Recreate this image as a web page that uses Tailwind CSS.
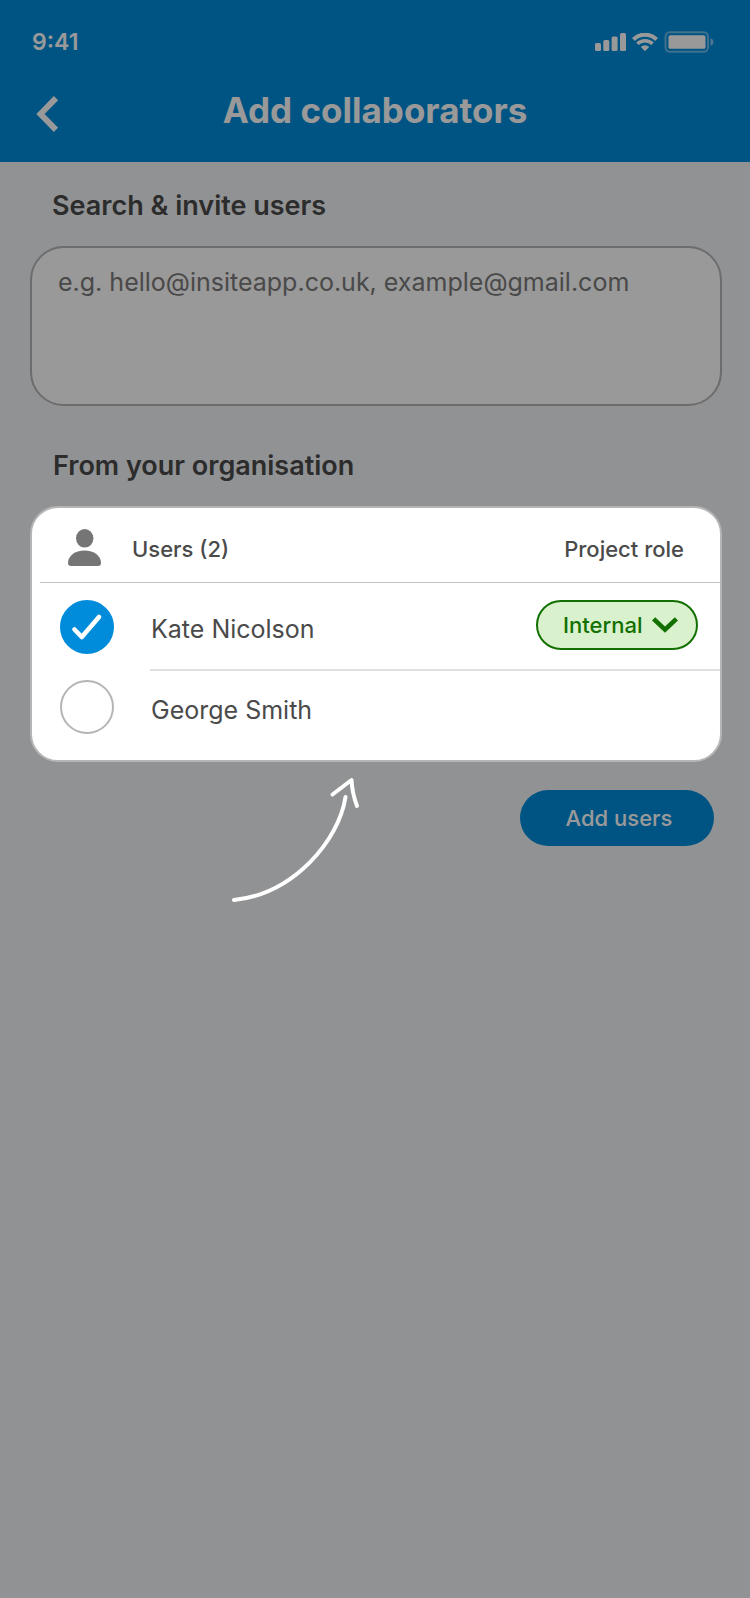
<!DOCTYPE html>
<html lang="en">
<head>
    <meta charset="UTF-8">
    <meta name="viewport" content="width=device-width, initial-scale=1.0">
    <title>Add collaborators</title>
    <script src="https://cdn.jsdelivr.net/npm/@tailwindcss/browser@4"></script>
</head>
<body class="relative min-h-screen bg-[#f2f4f7] font-['Inter','Liberation_Sans',sans-serif] text-[#4a4a4a]">
    <!-- Header -->
    <header class="h-[162px] bg-[#008cda] text-white">
        <!-- Status bar -->
        <div class="flex items-center justify-between pt-[26px] pl-8 pr-9">
            <span class="text-[23px] leading-8 font-semibold">9:41</span>
            <div class="flex items-center gap-1.5">
                <svg class="w-[31px] h-[18px]" viewBox="0 0 31 18" fill="currentColor" aria-hidden="true">
                    <rect x="0" y="10" width="6" height="8" rx="1.5"/>
                    <rect x="8.3" y="7" width="6" height="11" rx="1.5"/>
                    <rect x="16.6" y="3.5" width="6" height="14.5" rx="1.5"/>
                    <rect x="25" y="0" width="6" height="18" rx="1.5"/>
                </svg>
                <svg class="w-[26px] h-[18px]" viewBox="0 0 26 18" fill="none" stroke="currentColor" stroke-width="4" aria-hidden="true">
                    <path d="M1.4 6.5a16.5 16.5 0 0 1 23.2 0" stroke-width="4.2"/>
                    <path d="M5.4 10.8a11 11 0 0 1 15.2 0" stroke-width="3.6"/>
                    <path d="M13 18.2l4.2-4.2a6 6 0 0 0-8.4 0z" fill="currentColor" stroke="none"/>
                </svg>
                <svg class="w-[50px] h-[22px]" viewBox="0 0 50 22" fill="none" aria-hidden="true">
                    <rect x="1.5" y="1.2" width="42.5" height="19.6" rx="4.5" stroke="currentColor" stroke-width="2" opacity=".42"/>
                    <rect x="4.5" y="4.2" width="37" height="13.6" rx="1.6" fill="currentColor"/>
                    <path d="M46.5 7.2c4 1.2 4 6.4 0 7.6z" fill="currentColor" opacity=".5"/>
                </svg>
            </div>
        </div>
        <div class="grid grid-cols-[36px_1fr_36px] items-center pt-[30px] px-[35px]">
            <button type="button" aria-label="Back" class="pt-2">
                <svg class="w-6 h-9" viewBox="0 0 24 36" fill="none" stroke="currentColor" stroke-width="6" aria-hidden="true">
                    <path d="M21 2.2L5.5 18 21 33.8"/>
                </svg>
            </button>
            <h1 class="text-center text-[35px] leading-10 font-bold">Add collaborators</h1>
        </div>
    </header>

    <main class="pt-7 pl-[30px] pr-7">
        <label for="invite" class="block pl-[22px] text-[27px] leading-8 font-semibold">Search &amp; invite users</label>
        <textarea id="invite" placeholder="e.g. hello@insiteapp.co.uk, example@gmail.com" class="block w-full h-40 mt-6 px-[26px] pt-[18px] resize-none rounded-[34px] border-2 border-[#b5b5b5] bg-white text-[25px] leading-8 placeholder:text-[#7a7a7a]"></textarea>

        <h2 id="organisation" class="mt-11 pl-[23px] text-[27px] leading-8 font-semibold">From your organisation</h2>

        <!-- Highlighted users card, sits above the dimmed page -->
        <div class="relative z-20 mt-6 pl-2 pb-[17px] rounded-[28px] border-2 border-[#b5b5b5] bg-white">
            <table aria-labelledby="organisation" class="w-full border-separate border-spacing-0 text-left">
                <thead>
                    <tr class="h-[75px] text-[22px]">
                        <th colspan="2" class="p-0 pl-7 pt-1 border-b border-[#c4c4c4] font-medium">
                            <div class="flex items-center gap-[31px]">
                                <svg class="w-[33px] h-[37px]" viewBox="0 0 33 37" fill="#757575" aria-hidden="true">
                                    <ellipse cx="16.7" cy="9.3" rx="8.7" ry="9.3"/>
                                    <path d="M0 34C0 27 7 21.6 16.5 21.6S33 27 33 34c0 2-1 3-3 3H3c-2 0-3-1-3-3z"/>
                                </svg>
                                <span class="pt-1">Users (2)</span>
                            </div>
                        </th>
                        <th class="p-0 pr-9 pt-2 border-b border-[#c4c4c4] text-right font-medium">Project role</th>
                    </tr>
                </thead>
                <tbody class="text-[25px]">
                    <tr class="h-[88px]">
                        <td class="w-[110px] p-0 pl-5">
                            <div class="relative w-[54px] h-[54px]">
                                <input id="kate" type="checkbox" checked class="peer block size-full appearance-none rounded-full border-2 border-[#b5b5b5] bg-white checked:border-[#008cda] checked:bg-[#008cda]">
                                <svg class="absolute inset-0 hidden pointer-events-none peer-checked:block" viewBox="0 0 54 54" fill="none" stroke="#fff" stroke-width="4.6" stroke-linecap="round" stroke-linejoin="round" aria-hidden="true">
                                    <path d="M14.5 29.5l7.3 7.5L39 17"/>
                                </svg>
                            </div>
                        </td>
                        <td class="p-0 pt-2 pl-px border-b-2 border-[#e0e0e0]"><label for="kate">Kate Nicolson</label></td>
                        <td class="p-0 border-b-2 border-[#e0e0e0]">
                            <div class="relative w-[162px] ml-auto mr-[22px] mb-0.5">
                                <select aria-label="Project role for Kate Nicolson" class="block w-full h-[50px] pl-[25px] appearance-none rounded-full border-2 border-[#127000] bg-[#d9f1cc] text-[22px] font-medium text-[#127000]">
                                    <option>Internal</option>
                                    <option>External</option>
                                </select>
                                <svg class="absolute right-5 top-[17px] w-[26px] h-4 pointer-events-none" viewBox="0 0 26 16" fill="none" stroke="#127000" stroke-width="4.6" aria-hidden="true">
                                    <path d="M1.6 1.8L13 12.6 24.4 1.8"/>
                                </svg>
                            </div>
                        </td>
                    </tr>
                    <tr class="h-[72px]">
                        <td class="p-0 pl-5">
                            <div class="relative w-[54px] h-[54px]">
                                <input id="george" type="checkbox" class="peer block size-full appearance-none rounded-full border-2 border-[#b5b5b5] bg-white checked:border-[#008cda] checked:bg-[#008cda]">
                                <svg class="absolute inset-0 hidden pointer-events-none peer-checked:block" viewBox="0 0 54 54" fill="none" stroke="#fff" stroke-width="4.6" stroke-linecap="round" stroke-linejoin="round" aria-hidden="true">
                                    <path d="M14.5 29.5l7.3 7.5L39 17"/>
                                </svg>
                            </div>
                        </td>
                        <td class="p-0 pt-2 pl-px"><label for="george">George Smith</label></td>
                        <td></td>
                    </tr>
                </tbody>
            </table>
        </div>

        <div class="flex items-start justify-between pt-3 pl-[200px] pr-2">
            <svg class="relative z-20 w-[132px] h-[130px]" viewBox="0 0 132 130" fill="none" stroke="#fff" stroke-width="4" stroke-linecap="round" stroke-linejoin="round" aria-hidden="true">
                <path d="M4 126C64 120 109 66 115.5 23"/>
                <path d="M102.5 20.5L121.5 6C122 16 124 24 127 32"/>
            </svg>
            <button type="button" class="w-[194px] h-14 mt-4 pl-1 rounded-full bg-[#008cda] text-[22px] font-medium text-white">Add users</button>
        </div>
    </main>

    <!-- Dimmed backdrop -->
    <div class="absolute inset-0 z-10 bg-black/40"></div>
</body>
</html>
